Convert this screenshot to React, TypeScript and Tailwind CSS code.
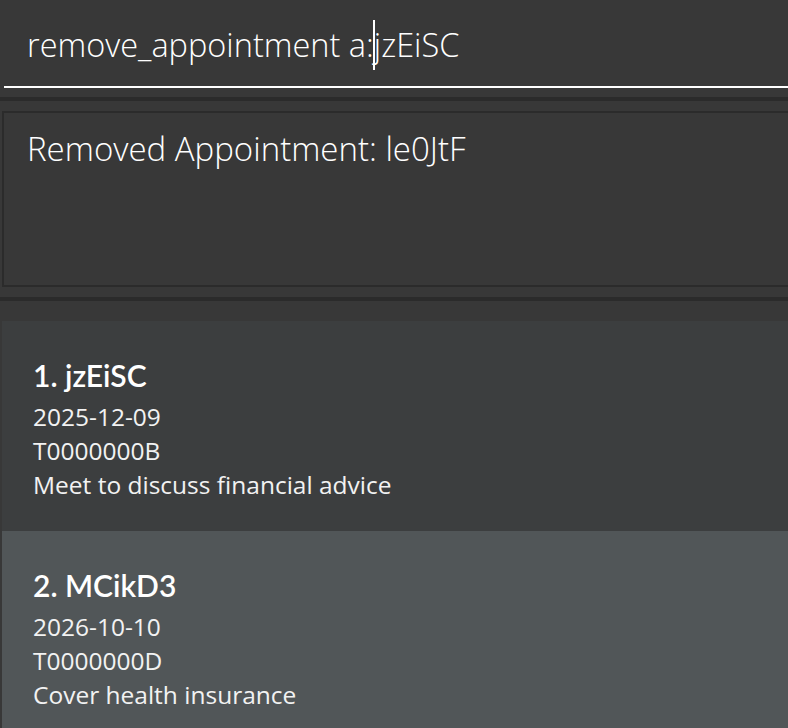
export default function App() {
  const items = [
    { idx: 1, id: 'jzEiSC', date: '2025-12-09', nric: 'T0000000B', desc: 'Meet to discuss financial advice', bg: 'bg-[#3c3e3f]' },
    { idx: 2, id: 'MCikD3', date: '2026-10-10', nric: 'T0000000D', desc: 'Cover health insurance', bg: 'bg-[#515658]' },
  ]

  return (
    <div className="w-[788px] h-[728px] overflow-hidden bg-[#383838] text-white font-['Open_Sans',sans-serif]">
      {/* Command box */}
      <div className="h-[97px] pl-[4px]">
        <div className="h-[88px] border-b-2 border-white pl-[23px] pt-[4px] flex items-center">
          <span className="text-[32.5px] font-light leading-none">remove_appointment a:</span>
          <span className="w-[2px] h-[50px] bg-white -mx-[1px]" />
          <span className="text-[32.5px] font-light leading-none">jzEiSC</span>
        </div>
      </div>
      <div className="h-[4px] bg-[#2b2b2b]" />

      {/* Result display */}
      <div className="h-[196px] pt-[10px] pl-[2px]">
        <div className="h-[176px] border-2 border-r-0 border-[#2b2b2b] pl-[23px] pt-[14px]">
          <p className="text-[33px] font-light leading-[44px]">Removed Appointment: le0JtF</p>
        </div>
      </div>
      <div className="h-[4px] bg-[#2b2b2b]" />

      {/* List */}
      <div className="pt-[20px] pl-[2px]">
        {items.map(item => (
          <div key={item.idx} className={`${item.bg} h-[210px] pl-[31px] pt-[32px]`}>
            <p className="font-['Lato',sans-serif] text-[30px] font-semibold leading-[44px]">{item.idx}. {item.id}</p>
            <div className="mt-[3px] text-[24.5px] leading-[34px] text-[#f2f2f2]">
              <p>{item.date}</p>
              <p>{item.nric}</p>
              <p>{item.desc}</p>
            </div>
          </div>
        ))}
      </div>
    </div>
  )
}
